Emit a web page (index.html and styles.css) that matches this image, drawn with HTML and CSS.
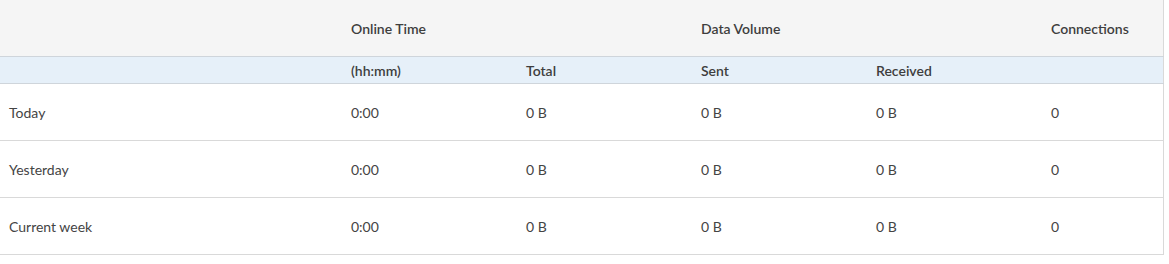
FILE: index.html
```html
<!DOCTYPE html>
<html>
<head>
<meta charset="utf-8">
<link rel="stylesheet" href="styles.css">
</head>
<body>
<table class="stats">
  <colgroup>
    <col class="c-label">
    <col class="c-data">
    <col class="c-data">
    <col class="c-data">
    <col class="c-data">
    <col class="c-last">
  </colgroup>
  <thead>
    <tr class="head-main">
      <th></th>
      <th>Online Time</th>
      <th></th>
      <th>Data Volume</th>
      <th></th>
      <th>Connections</th>
    </tr>
    <tr class="head-sub">
      <th></th>
      <th>(hh:mm)</th>
      <th>Total</th>
      <th>Sent</th>
      <th>Received</th>
      <th></th>
    </tr>
  </thead>
  <tbody>
    <tr>
      <td>Today</td><td>0:00</td><td>0 B</td><td>0 B</td><td>0 B</td><td>0</td>
    </tr>
    <tr>
      <td>Yesterday</td><td>0:00</td><td>0 B</td><td>0 B</td><td>0 B</td><td>0</td>
    </tr>
    <tr>
      <td>Current week</td><td>0:00</td><td>0 B</td><td>0 B</td><td>0 B</td><td>0</td>
    </tr>
  </tbody>
</table>
</body>
</html>
```

FILE: styles.css
```css
html, body {
  margin: 0;
  padding: 0;
  background: #ffffff;
}

body {
  font-family: "Lato", "Open Sans", sans-serif;
  font-size: 14px;
  color: #333333;
}

.stats {
  width: 1163px;
  border-collapse: collapse;
  table-layout: fixed;
  border-right: 1px solid #d9d9d9;
}

.c-label { width: 343px; }
.c-data { width: 175px; }
.c-last { width: 120px; }

.stats th,
.stats td {
  text-align: left;
  padding: 0 8px;
  vertical-align: middle;
  border-bottom: 1px solid #d9d9d9;
}

.stats td:first-child,
.stats th:first-child {
  padding-left: 9px;
}

.head-main th {
  height: 56px;
  background: #f5f5f5;
  font-weight: 600;
  color: #3e3e3e;
  border-bottom: 1px solid #cfd5db;
}

.head-sub th {
  height: 26px;
  background: #e6f0f9;
  font-weight: 600;
  color: #3e3e3e;
  border-bottom: 1px solid #cfd5db;
}

.stats tbody td {
  height: 56px;
  color: #444444;
}
```
